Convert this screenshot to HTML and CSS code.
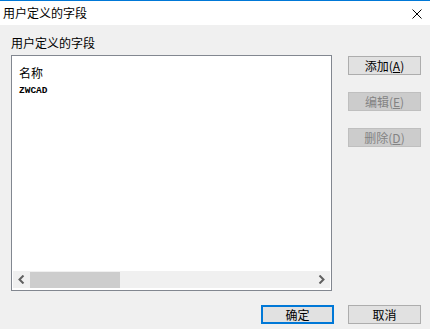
FILE: index.html
```html
<!DOCTYPE html>
<html>
<head>
    <title>用户定义的字段</title>
    <link rel="stylesheet" href="styles.css">
</head>
<body>
    <div class="dialog">
        <div class="titlebar">
            <span class="title">用户定义的字段</span>
            <svg class="close" width="10" height="10" viewBox="0 0 10 10">
                <path d="M0.5 0.5 L9.5 9.5 M9.5 0.5 L0.5 9.5" stroke="#000" stroke-width="1" fill="none"/>
            </svg>
        </div>
        <div class="main">
            <div class="left">
                <div class="label">用户定义的字段</div>
                <div class="listbox">
                    <div class="items">
                        <div class="item-head">名称</div>
                        <div class="item">ZWCAD</div>
                    </div>
                    <div class="hscroll">
                        <svg class="arrow" width="7" height="9" viewBox="0 0 7 9">
                            <path d="M5.5 0.5 L1.5 4.5 L5.5 8.5" stroke="#606060" stroke-width="2" fill="none"/>
                        </svg>
                        <div class="track"><div class="thumb"></div></div>
                        <svg class="arrow" width="7" height="9" viewBox="0 0 7 9">
                            <path d="M1.5 0.5 L5.5 4.5 L1.5 8.5" stroke="#606060" stroke-width="2" fill="none"/>
                        </svg>
                    </div>
                </div>
            </div>
            <div class="side">
                <button class="btn">添加(<u>A</u>)</button>
                <button class="btn disabled">编辑(<u>E</u>)</button>
                <button class="btn disabled">删除(<u>D</u>)</button>
            </div>
        </div>
        <div class="footer">
            <button class="btn default">确定</button>
            <button class="btn">取消</button>
        </div>
    </div>
</body>
</html>
```

FILE: styles.css
```css
body {
    margin: 0;
    padding: 0;
    font-family: "Noto Sans CJK SC", "Noto Sans", sans-serif;
    font-size: 12px;
    color: #000;
}
.dialog {
    width: 430px;
    height: 329px;
    background-color: #f0f0f0;
    overflow: hidden;
}
.titlebar {
    height: 24px;
    border-top: 1px solid #0078d7;
    background-color: #fff;
    display: flex;
    align-items: center;
    justify-content: space-between;
    padding: 0 8px 0 3px;
}
.title {
    line-height: 16px;
}
.close {
    display: block;
    margin-top: 1px;
}
.main {
    display: flex;
    padding: 0 9px 0 11px;
    gap: 16px;
}
.left {
    width: 321px;
}
.label {
    margin-top: 10px;
    line-height: 16px;
    height: 16px;
}
.listbox {
    margin-top: 4px;
    height: 232px;
    border: 1px solid #828790;
    background-color: #fff;
    padding: 1px;
    box-sizing: content-box;
    display: flex;
    flex-direction: column;
}
.items {
    flex-grow: 1;
    padding: 7px 0 0 6px;
}
.item-head {
    line-height: 18px;
    height: 18px;
}
.item {
    margin-top: 3px;
    font-family: "Liberation Mono", monospace;
    font-weight: bold;
    font-size: 9.5px;
    line-height: 12px;
}
.hscroll {
    height: 17px;
    margin-bottom: 1px;
    background-color: #f0f0f0;
    display: flex;
    align-items: center;
}
.arrow {
    display: block;
    width: 17px;
    flex-shrink: 0;
}
.track {
    flex-grow: 1;
    height: 17px;
    display: flex;
}
.thumb {
    width: 90px;
    height: 16px;
    margin-top: 1px;
    background-color: #cdcdcd;
}
.side {
    display: flex;
    flex-direction: column;
    gap: 17px;
    padding-top: 31px;
}
.btn {
    width: 73px;
    height: 19px;
    padding: 0;
    border: 1px solid #adadad;
    background-color: #e1e1e1;
    font-family: "Noto Sans CJK SC", "Noto Sans", sans-serif;
    font-size: 12px;
    line-height: 16px;
    color: #000;
}
.btn.disabled {
    background-color: #cccccc;
    border-color: #bfbfbf;
    color: #838383;
}
.btn.default {
    border: 2px solid #0078d7;
}
.footer {
    display: flex;
    justify-content: flex-end;
    gap: 14px;
    padding: 14px 9px 0 0;
}
```
